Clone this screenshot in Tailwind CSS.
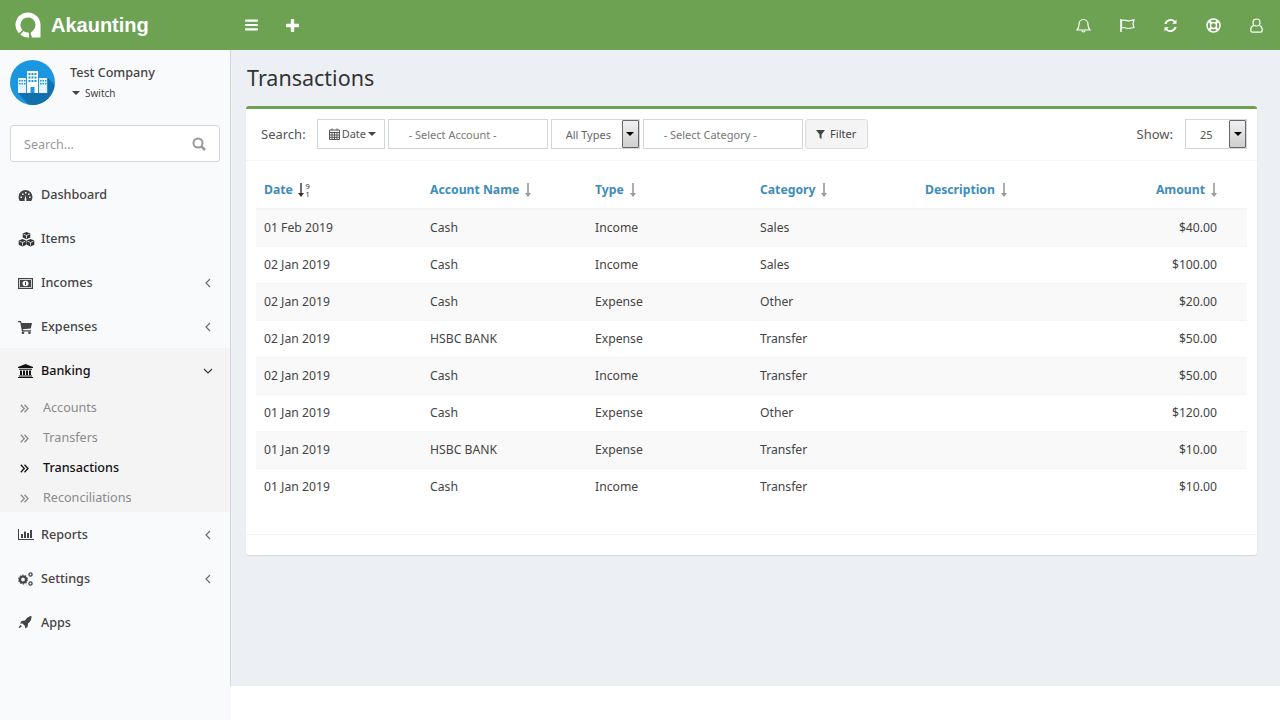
<!DOCTYPE html>
<html lang="en">
<head>
    <meta charset="UTF-8">
    <meta name="viewport" content="width=device-width, initial-scale=1.0">
    <title>Transactions - Akaunting</title>
    <script src="https://cdn.jsdelivr.net/npm/@tailwindcss/browser@4"></script>
</head>
<body class="bg-white font-['Noto_Sans',sans-serif] text-[12.6px] leading-[18px] text-[#333]">
    <div class="w-[1280px] h-[720px] overflow-hidden flex flex-col">
        <!-- top bar -->
        <header class="h-[50px] shrink-0 bg-[#6da252] flex items-center text-white">
            <div class="w-[230px] h-full flex items-center pl-[15px]">
                <svg width="26" height="26" viewBox="0 0 26 26" fill="none">
                    <path d="M5.570 19.690A10 10 0 1 1 23 13" stroke="#fff" stroke-width="5"/>
                    <path d="M6.840 20.880A10 10 0 0 0 13.900 23" stroke="#fff" stroke-width="5"/>
                    <path d="M20.500 13A7.500 7.500 0 0 1 18.300 18.300L15.500 21 17 25.500H25.500V13z" fill="#fff"/>
                </svg>
                <span class="ml-[10px] font-['Liberation_Sans',sans-serif] font-bold text-[20px]">Akaunting</span>
            </div>
            <div class="flex items-center pl-[15px]">
                <svg width="13" height="12" viewBox="0 0 13 12" fill="#fff"><rect y="0.500" width="13" height="2.200" rx="0.800"/><rect y="4.900" width="13" height="2.200" rx="0.800"/><rect y="9.300" width="13" height="2.200" rx="0.800"/></svg>
                <svg class="ml-[28px]" width="13" height="13" viewBox="0 0 13 13" fill="#fff"><rect y="4.800" width="13" height="3.400" rx="0.800"/><rect x="4.800" width="3.400" height="13" rx="0.800"/></svg>
            </div>
            <div class="ml-auto flex items-center gap-[28px] pr-[17px]">
                <svg class="mr-px" width="15" height="15" viewBox="0 0 15 15" fill="none" stroke="#fff" stroke-width="1.200"><path d="M1 12c1.500-1.500 2-2.500 2-5.500C3 3.500 5 1.500 7.500 1.500S12 3.500 12 6.500c0 3 .5 4 2 5.500z"/><path d="M6 12.500a1.500 1.500 0 0 0 3 0"/></svg>
                <svg width="15" height="15" viewBox="0 0 15 15" fill="none" stroke="#fff" stroke-width="1.200"><path d="M1 1v13" stroke-width="1.500"/><path d="M1.500 2.500c3-1.500 4.500 1 8 .3 1.500-.3 3-.8 4.500-1l-1 4 1 3.700c-2 0-3.500 1-5.500 1-2.500 0-4-2-7-.5z"/></svg>
                <svg width="15" height="15" viewBox="0 0 15 15" fill="#fff"><path d="M13.500 1.500v4.300H9.200l1.700-1.700A4.300 4.300 0 0 0 3.600 6H1.400a6.400 6.400 0 0 1 10.700-3.100z"/><path d="M1.500 13.500V9.200h4.300l-1.700 1.700A4.300 4.300 0 0 0 11.400 9h2.200a6.400 6.400 0 0 1-10.700 3.100z"/></svg>
                <svg width="15" height="15" viewBox="0 0 15 15" fill="none" stroke="#fff"><circle cx="7.500" cy="7.500" r="6.500" stroke-width="1.500"/><circle cx="7.500" cy="7.500" r="3" stroke-width="1.300"/><path d="M3 3l2.400 2.400M12 3L9.600 5.400M3 12l2.400-2.400M12 12L9.600 9.600" stroke-width="2.400"/></svg>
                <svg class="ml-px" width="13" height="15" viewBox="0 0 13 15" fill="none" stroke="#fff" stroke-width="1.200"><circle cx="6.500" cy="4.500" r="3.500"/><path d="M3.500 7.500C2 8 .8 9 .8 11.500v1c0 1 .7 1.700 1.700 1.700h8c1 0 1.700-.7 1.700-1.700v-1c0-2.500-1.200-3.500-2.700-4"/></svg>
            </div>
        </header>

        <div class="flex-1 flex min-h-0">
            <!-- sidebar -->
            <aside class="w-[231px] shrink-0 bg-[#f9fafc] relative">
                <div class="absolute right-0 top-0 h-[636px] w-px bg-[#d2d6de]"></div>
                <div class="flex pl-[10px] pt-[10px] h-[75px]">
                    <svg width="45" height="45" viewBox="0 0 45 45">
                        <circle cx="22.500" cy="22.500" r="22.500" fill="#1b97e0"/>
                        <path d="M8 33h30V18l6.500 7a22.500 22.500 0 0 1-22 20 22 22 0 0 1-4-.5z" fill="#1271ad"/>
                        <rect x="8" y="18" width="8" height="15" fill="#e8f2fa"/>
                        <rect x="29" y="18" width="8" height="15" fill="#e8f2fa"/>
                        <rect x="17" y="11" width="11" height="22" fill="#fff"/>
                        <path d="M18.500 13h2v2h-2zM21.500 13h2v2h-2zM24.500 13h2v2h-2zM18.500 16.500h2v2h-2zM21.500 16.500h2v2h-2zM24.500 16.500h2v2h-2zM18.500 20h2v2h-2zM21.500 20h2v2h-2zM24.500 20h2v2h-2zM20.500 27h4v6h-4zM9 20h1.500v1.500H9zM11.500 20H13v1.500h-1.500zM14 20h1.500v1.500H14zM9 23h1.500v1.500H9zM11.500 23H13v1.500h-1.500zM14 23h1.500v1.500H14zM30 20h1.500v1.500H30zM32.500 20H34v1.500h-1.500zM35 20h1.500v1.500H35zM30 23h1.500v1.500H30zM32.500 23H34v1.500h-1.500zM35 23h1.500v1.500H35z" fill="#1b97e0"/>
                    </svg>
                    <div class="ml-[15px]">
                        <div class="mt-[4px] text-[#444] font-medium">Test Company</div>
                        <div class="flex items-center mt-[4px] ml-[2px] text-[10px] leading-[14px] text-[#444]">
                            <span class="w-0 h-0 border-x-[4px] border-x-transparent border-t-[4px] border-t-[#444] mr-[5px]"></span>Switch
                        </div>
                    </div>
                </div>
                <div class="ml-[10px] w-[210px] h-[37px] bg-white border border-[#d2d6de] rounded-[3px] flex items-center justify-between pl-[13px] pr-[13px] text-[#999]">
                    <span class="pt-[2px]">Search...</span>
                    <svg width="14" height="14" viewBox="0 0 14 14" fill="none" stroke="#999" stroke-width="2"><circle cx="6" cy="6" r="4.500"/><path d="M9.500 9.500L13 13" stroke-width="2.500"/></svg>
                </div>
                <nav class="mt-[11px] text-[#444]">
                    <a class="h-[44px] flex items-center pl-[18px] pr-[20px]">
                        <svg class="w-[15px] mr-[8px]" width="15" height="13" viewBox="0 0 15 13"><path fill="#444" fill-rule="evenodd" d="M7.500 1a7 7 0 0 0-7 7c0 1.500.4 2.700 1.200 4h11.600c.8-1.300 1.200-2.500 1.200-4a7 7 0 0 0-7-7zM4 4.500h1.500V6H4zM7 3h1.500v1.500H7zM10 4.500h1.500V6H10zM2.500 7.500H4V9H2.500zM11 7.500h1.500V9H11zM6.500 11l1-5 1 5a1 1 0 0 1-2 0z"/></svg>
                        <span class="font-medium">Dashboard</span>
                    </a>
                    <a class="h-[44px] flex items-center pl-[18px] pr-[20px]">
                        <svg class="shrink-0 mr-[6px]" width="17" height="15" viewBox="0 0 17 15"><path fill="#333" d="M8.500 0l3.800 1.600v3.900L8.500 7.200 4.700 5.500V1.600zM4.500 7L8.300 8.600v4.200L4.500 14.600.7 12.800V8.600zM12.500 7l3.800 1.600v4.200l-3.800 1.800-3.800-1.800V8.600z"/><path stroke="#f9fafc" stroke-width=".8" fill="none" d="M5.500 2.200l3 1.300 3-1.300M8.500 3.500v3M1.500 9.200l3 1.300 3-1.300M4.500 10.500v3M9.500 9.200l3 1.300 3-1.300M12.500 10.500v3"/></svg>
                        <span class="font-medium">Items</span>
                    </a>
                    <a class="h-[44px] flex items-center pl-[18px] pr-[20px]">
                        <svg class="w-[15px] mr-[8px]" width="15" height="11" viewBox="0 0 15 11"><rect x=".6" y=".6" width="13.800" height="9.800" fill="none" stroke="#444" stroke-width="1.200"/><path d="M2 2h11v7H2z" fill="#444"/><ellipse cx="7.500" cy="5.500" rx="3" ry="2.800" fill="#f9fafc"/><rect x="7" y="4" width="1" height="3" fill="#444"/></svg>
                        <span class="font-medium">Incomes</span>
                        <svg class="ml-auto" width="6" height="10" viewBox="0 0 6 10" fill="none" stroke="#666" stroke-width="1.100"><path d="M5 1L1 5l4 4"/></svg>
                    </a>
                    <a class="h-[44px] flex items-center pl-[18px] pr-[20px]">
                        <svg class="w-[15px] mr-[8px]" width="15" height="13" viewBox="0 0 15 13"><path fill="#444" d="M0 0h3l.6 2H14l-1.200 5.500-8 .8.300 1H13v1.200H4L2.200 1.300H0z"/><circle cx="5" cy="11.700" r="1.300" fill="#444"/><circle cx="11.500" cy="11.700" r="1.300" fill="#444"/></svg>
                        <span class="font-medium">Expenses</span>
                        <svg class="ml-auto" width="6" height="10" viewBox="0 0 6 10" fill="none" stroke="#666" stroke-width="1.100"><path d="M5 1L1 5l4 4"/></svg>
                    </a>
                    <div class="bg-[#f4f4f5] -mt-px pt-px">
                        <a class="h-[44px] flex items-center pl-[18px] pr-[18px] text-[#111]">
                            <svg class="w-[15px] mr-[8px]" width="15" height="14" viewBox="0 0 15 14"><path fill="#111" d="M7.500 0L15 3v1H0V3zM1 4.700h13v1H1zM2 6.500h2v4.500H2zM5 6.500h2v4.500H5zM8 6.500h2v4.500H8zM11 6.500h2v4.500h-2zM1 11.500h13v1H1zM0 13h15v1H0z"/></svg>
                            <span class="font-medium">Banking</span>
                            <svg class="ml-auto" width="10" height="6" viewBox="0 0 10 6" fill="none" stroke="#333" stroke-width="1.100"><path d="M1 1l4 4 4-4"/></svg>
                        </a>
                        <div class="text-[#8a8a8a]">
                            <a class="h-[30px] flex items-center pl-[20px]"><svg class="mr-[14px]" width="9" height="9" viewBox="0 0 9 9" fill="none" stroke="#8a8a8a" stroke-width="1.300"><path d="M.8.800L4.300 4.500.8 8.200M4.500.8L8 4.500 4.500 8.200"/></svg>Accounts</a>
                            <a class="h-[30px] flex items-center pl-[20px]"><svg class="mr-[14px]" width="9" height="9" viewBox="0 0 9 9" fill="none" stroke="#8a8a8a" stroke-width="1.300"><path d="M.8.800L4.300 4.500.8 8.200M4.500.8L8 4.500 4.500 8.200"/></svg>Transfers</a>
                            <a class="h-[30px] flex items-center pl-[20px] text-[#111] font-medium"><svg class="mr-[14px]" width="9" height="9" viewBox="0 0 9 9" fill="none" stroke="#111" stroke-width="1.300"><path d="M.8.800L4.300 4.500.8 8.200M4.500.8L8 4.500 4.500 8.200"/></svg>Transactions</a>
                            <a class="h-[29px] pt-px flex items-center pl-[20px]"><svg class="mr-[14px]" width="9" height="9" viewBox="0 0 9 9" fill="none" stroke="#8a8a8a" stroke-width="1.300"><path d="M.8.800L4.300 4.500.8 8.200M4.500.8L8 4.500 4.500 8.200"/></svg>Reconciliations</a>
                        </div>
                    </div>
                    <a class="h-[44px] pt-px flex items-center pl-[18px] pr-[20px]">
                        <svg class="w-[16px] mr-[7px]" width="16" height="11" viewBox="0 0 16 11"><path fill="#444" d="M0 0h1v10h15v1H0zM3 5h2v4H3zM6 2.500h2V9H6zM9 4h2v5H9zM12 1h2v8h-2z"/></svg>
                        <span class="font-medium">Reports</span>
                        <svg class="ml-auto" width="6" height="10" viewBox="0 0 6 10" fill="none" stroke="#666" stroke-width="1.100"><path d="M5 1L1 5l4 4"/></svg>
                    </a>
                    <a class="h-[44px] pt-px flex items-center pl-[18px] pr-[20px]">
                        <svg class="w-[15px] mr-[8px]" width="15" height="14" viewBox="0 0 15 14" fill="none" stroke="#444"><circle cx="5" cy="7.500" r="3" stroke-width="2.200"/><circle cx="5" cy="7.500" r="4.300" stroke-width="1.200" stroke-dasharray="1.500 1.200"/><circle cx="12.500" cy="2.500" r="1.600" stroke-width="1.300"/><circle cx="12.500" cy="11.500" r="1.600" stroke-width="1.300"/></svg>
                        <span class="font-medium">Settings</span>
                        <svg class="ml-auto" width="6" height="10" viewBox="0 0 6 10" fill="none" stroke="#666" stroke-width="1.100"><path d="M5 1L1 5l4 4"/></svg>
                    </a>
                    <a class="h-[44px] pt-px flex items-center pl-[18px] pr-[20px]">
                        <svg class="w-[14px] mr-[9px]" width="14" height="13" viewBox="0 0 14 13"><path fill="#444" d="M13.500 0c.2 3-1 5.500-3.500 7.500L9.500 11 7 12.500V10L4.500 7.500H2L3.500 5 7 4.500C9 1.500 11 .2 13.500 0zM2.500 9C1.500 9.500 1 10.500.8 12c1.500-.2 2.500-.8 3-1.700z"/></svg>
                        <span class="font-medium">Apps</span>
                    </a>
                </nav>
            </aside>

            <!-- content -->
            <main class="flex-1 min-w-0 h-[636px] bg-[#ecf0f5] pl-[15px] pr-[23px]">
                <h1 class="h-[56px] flex items-center pl-px text-[21.5px] leading-[26px] text-[#333] pb-[1px]">Transactions</h1>
                <section class="h-[449px] bg-white border-t-[3px] border-[#6da252] rounded-[3px] shadow-[0_1px_1px_rgba(0,0,0,0.1)] flex flex-col">
                    <div class="h-[52px] shrink-0 border-b border-[#f4f4f4] flex items-center pb-[1px] pl-[15px] pr-[10px] text-[#555] text-[13px]">
                        <span class="mr-[11px]">Search:</span>
                        <div class="w-[68px] h-[30px] border border-[#d2d6de] flex items-center pl-[11px] text-[11px]">
                            <svg class="mr-[2px]" width="11" height="12" viewBox="0 0 11 12"><path fill="none" stroke="#555" d="M.5 2h10v9.500H.5zM.5 4.500h10M3 5v6.500M5.500 5v6.500M8 5v6.500M.5 7h10M.5 9.300h10"/><path stroke="#555" d="M3 .5v2M8 .5v2"/></svg>Date<span class="ml-[2px] w-0 h-0 border-x-[4px] border-x-transparent border-t-[4px] border-t-[#444]"></span>
                        </div>
                        <div class="ml-[3px] w-[160px] h-[30px] border border-[#d2d6de] flex items-center pl-[20px] pt-px text-[11px] text-[#777]">- Select Account -</div>
                        <div class="ml-[3px] w-[89px] h-[30px] border border-[#d2d6de] flex items-center justify-between pl-[14px] text-[11px] text-[#666]">
                            <span class="pt-px">All Types</span>
                            <span class="w-[17px] h-[28px] border border-[#666] rounded-[1px] bg-gradient-to-b from-[#f0f0f0] to-[#cfcfcf] flex items-center justify-center"><span class="w-0 h-0 border-x-[4px] border-x-transparent border-t-[4px] border-t-black"></span></span>
                        </div>
                        <div class="ml-[3px] w-[160px] h-[30px] border border-[#d2d6de] flex items-center pl-[20px] pt-px text-[11px] text-[#777]">- Select Category -</div>
                        <div class="ml-[2px] w-[63px] h-[30px] bg-[#f4f4f4] border border-[#ddd] rounded-[3px] flex items-center justify-center text-[11px] text-[#444]">
                            <svg class="mr-[5px]" width="9" height="9" viewBox="0 0 9 9"><path fill="#444" d="M0 0h9L5.500 4.500V9l-2-1.500v-3z"/></svg>Filter
                        </div>
                        <span class="ml-auto mr-[12px]">Show:</span>
                        <div class="w-[62px] h-[30px] border border-[#d2d6de] flex items-center justify-between pl-[14px] text-[11px] text-[#555]">
                            <span class="pt-px">25</span>
                            <span class="w-[17px] h-[28px] border border-[#666] rounded-[1px] bg-gradient-to-b from-[#f0f0f0] to-[#cfcfcf] flex items-center justify-center"><span class="w-0 h-0 border-x-[4px] border-x-transparent border-t-[4px] border-t-black"></span></span>
                        </div>
                    </div>
                    <div class="flex-1 px-[10px] pt-[10px]">
                        <table class="w-full table-fixed border-collapse text-[12.2px] leading-[18px] text-[#444]">
                            <thead>
                                <tr class="h-[38px] border-b-2 border-[#f4f4f4] text-[#3c8dbc] text-left font-bold">
                                    <th class="w-[166px] pl-[8px]"><span class="inline-flex items-center gap-[5px]">Date <svg class="-my-px" width="13" height="18" viewBox="0 0 13 18"><path stroke="#333" stroke-width="1.400" d="M3 2v12"/><path fill="#333" d="M0 12h6l-3 4z"/><text x="7.500" y="8" font-size="7.500" font-weight="400" fill="#333">9</text><text x="7.500" y="16" font-size="7.500" font-weight="400" fill="#333">1</text></svg></span></th>
                                    <th class="pl-[8px]"><span class="inline-flex items-center gap-[5px]">Account Name <svg width="8" height="14" viewBox="0 0 8 14"><path stroke="#999" stroke-width="1.600" d="M4 0v12"/><path fill="#999" d="M1 10h6l-3 4z"/></svg></span></th>
                                    <th class="pl-[8px]"><span class="inline-flex items-center gap-[5px]">Type <svg width="8" height="14" viewBox="0 0 8 14"><path stroke="#999" stroke-width="1.600" d="M4 0v12"/><path fill="#999" d="M1 10h6l-3 4z"/></svg></span></th>
                                    <th class="pl-[8px]"><span class="inline-flex items-center gap-[5px]">Category <svg width="8" height="14" viewBox="0 0 8 14"><path stroke="#999" stroke-width="1.600" d="M4 0v12"/><path fill="#999" d="M1 10h6l-3 4z"/></svg></span></th>
                                    <th class="pl-[8px]"><span class="inline-flex items-center gap-[5px]">Description <svg width="8" height="14" viewBox="0 0 8 14"><path stroke="#999" stroke-width="1.600" d="M4 0v12"/><path fill="#999" d="M1 10h6l-3 4z"/></svg></span></th>
                                    <th class="pr-[29px] text-right"><span class="inline-flex items-center gap-[5px]">Amount <svg width="8" height="14" viewBox="0 0 8 14"><path stroke="#999" stroke-width="1.600" d="M4 0v12"/><path fill="#999" d="M1 10h6l-3 4z"/></svg></span></th>
                                </tr>
                            </thead>
                            <tbody>
                                <tr class="h-[37px] bg-[#f9f9f9] border-b border-[#f4f4f4]"><td class="pl-[8px]">01 Feb 2019</td><td class="pl-[8px]">Cash</td><td class="pl-[8px]">Income</td><td class="pl-[8px]">Sales</td><td></td><td class="pr-[30px] text-right">$40.00</td></tr>
                                <tr class="h-[37px] border-b border-[#f4f4f4]"><td class="pl-[8px]">02 Jan 2019</td><td class="pl-[8px]">Cash</td><td class="pl-[8px]">Income</td><td class="pl-[8px]">Sales</td><td></td><td class="pr-[30px] text-right">$100.00</td></tr>
                                <tr class="h-[37px] bg-[#f9f9f9] border-b border-[#f4f4f4]"><td class="pl-[8px]">02 Jan 2019</td><td class="pl-[8px]">Cash</td><td class="pl-[8px]">Expense</td><td class="pl-[8px]">Other</td><td></td><td class="pr-[30px] text-right">$20.00</td></tr>
                                <tr class="h-[37px] border-b border-[#f4f4f4]"><td class="pl-[8px]">02 Jan 2019</td><td class="pl-[8px]">HSBC BANK</td><td class="pl-[8px]">Expense</td><td class="pl-[8px]">Transfer</td><td></td><td class="pr-[30px] text-right">$50.00</td></tr>
                                <tr class="h-[37px] bg-[#f9f9f9] border-b border-[#f4f4f4]"><td class="pl-[8px]">02 Jan 2019</td><td class="pl-[8px]">Cash</td><td class="pl-[8px]">Income</td><td class="pl-[8px]">Transfer</td><td></td><td class="pr-[30px] text-right">$50.00</td></tr>
                                <tr class="h-[37px] border-b border-[#f4f4f4]"><td class="pl-[8px]">01 Jan 2019</td><td class="pl-[8px]">Cash</td><td class="pl-[8px]">Expense</td><td class="pl-[8px]">Other</td><td></td><td class="pr-[30px] text-right">$120.00</td></tr>
                                <tr class="h-[37px] bg-[#f9f9f9] border-b border-[#f4f4f4]"><td class="pl-[8px]">01 Jan 2019</td><td class="pl-[8px]">HSBC BANK</td><td class="pl-[8px]">Expense</td><td class="pl-[8px]">Transfer</td><td></td><td class="pr-[30px] text-right">$10.00</td></tr>
                                <tr class="h-[37px]"><td class="pl-[8px]">01 Jan 2019</td><td class="pl-[8px]">Cash</td><td class="pl-[8px]">Income</td><td class="pl-[8px]">Transfer</td><td></td><td class="pr-[30px] text-right">$10.00</td></tr>
                            </tbody>
                        </table>
                    </div>
                    <div class="h-[21px] shrink-0 border-t border-[#f4f4f4]"></div>
                </section>
            </main>
        </div>
    </div>
</body>
</html>
